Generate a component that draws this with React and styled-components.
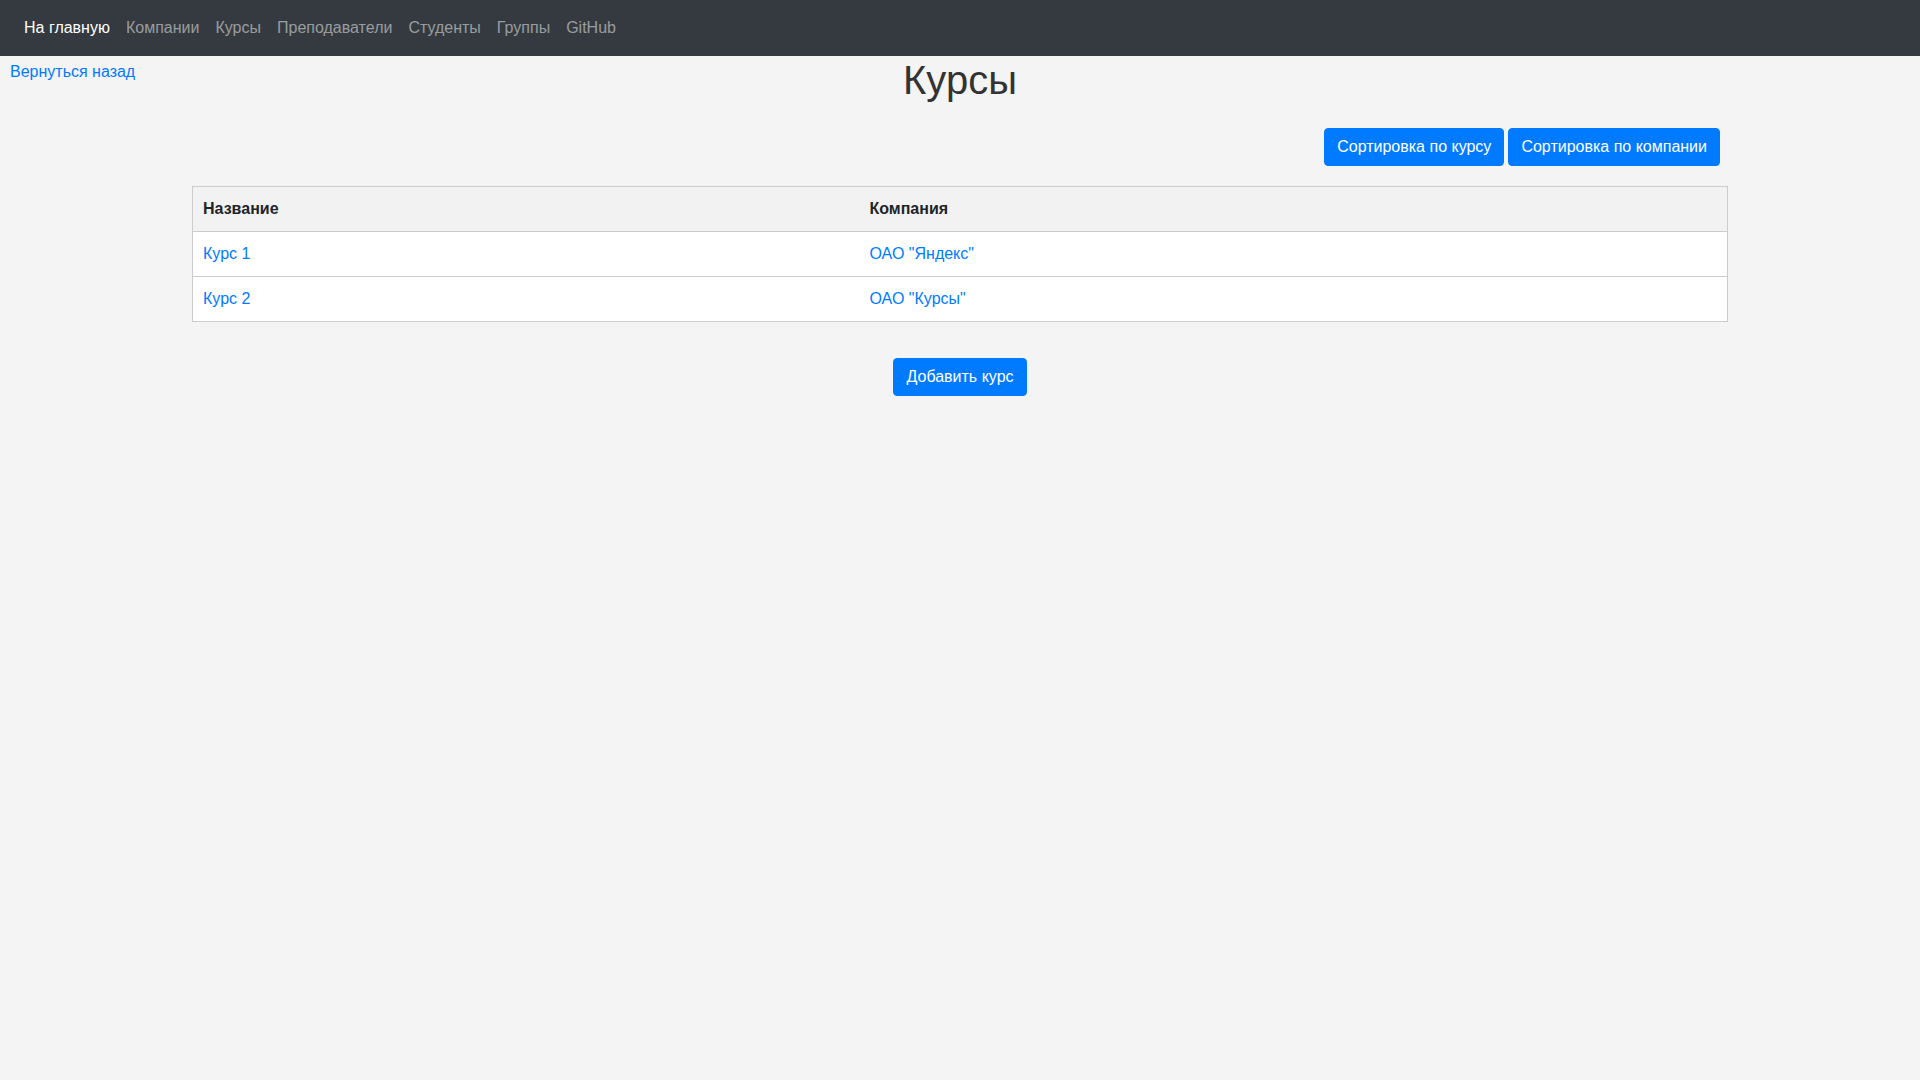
import React from "react";
import styled, { createGlobalStyle } from "styled-components";

const GlobalStyle = createGlobalStyle`
  * { box-sizing: border-box; }
  html, body {
    margin: 0;
    padding: 0;
    background: #f4f4f4;
    font-family: "Liberation Sans", Arial, sans-serif;
    font-size: 16px;
    line-height: 1.5;
    color: #212529;
  }
`;

const NavBar = styled.nav`
  height: 56px;
  background: #343a40;
  display: flex;
  align-items: center;
  padding: 8px 16px;
`;

const NavLink = styled.a`
  padding: 8px;
  color: ${(p) => (p.$active ? "#fff" : "rgba(255,255,255,0.5)")};
  text-decoration: none;
  font-size: 16px;
  line-height: 24px;
  cursor: pointer;
`;

const Header = styled.header`
  display: grid;
  grid-template-columns: 1fr auto 1fr;
  align-items: start;
`;

const BackLink = styled.a`
  justify-self: start;
  margin: 4px 0 0 10px;
  color: #007bff;
  text-decoration: none;
  line-height: 24px;
`;

const Title = styled.h1`
  margin: 0;
  font-size: 40px;
  line-height: 48px;
  font-weight: 500;
  color: #333;
  text-align: center;
`;

const Toolbar = styled.div`
  width: 80%;
  margin: 24px auto 20px;
  padding-right: 8px;
  display: flex;
  justify-content: flex-end;
  gap: 4px;
`;

const Button = styled.button`
  font-family: inherit;
  font-size: 16px;
  line-height: 24px;
  padding: 6px 12px;
  border: 1px solid #007bff;
  border-radius: 4px;
  background: #007bff;
  color: #fff;
  cursor: pointer;
`;

const Table = styled.table`
  width: 80%;
  margin: 0 auto;
  border-collapse: collapse;
  border: 1px solid #cccccc;
  background: #fff;
`;

const Th = styled.th`
  text-align: left;
  padding: 10px;
  line-height: 24px;
  font-weight: 700;
  background: #f2f2f2;
  border-bottom: 1px solid #cccccc;
  width: ${(p) => p.$w || "auto"};
`;

const Td = styled.td`
  padding: 10px;
  line-height: 24px;
  border-bottom: 1px solid #cccccc;
`;

const Link = styled.a`
  color: #007bff;
  text-decoration: none;
`;

const Footer = styled.div`
  display: flex;
  justify-content: center;
  margin-top: 36px;
`;

const navItems = ["На главную", "Компании", "Курсы", "Преподаватели", "Студенты", "Группы", "GitHub"];

const rows = [
  { course: "Курс 1", company: 'ОАО "Яндекс"' },
  { course: "Курс 2", company: 'ОАО "Курсы"' },
];

export default function App() {
  return (
    <>
      <GlobalStyle />
      <NavBar>
        {navItems.map((n, i) => (
          <NavLink key={n} $active={i === 0}>{n}</NavLink>
        ))}
      </NavBar>
      <Header>
        <BackLink>Вернуться назад</BackLink>
        <Title>Курсы</Title>
        <div />
      </Header>
      <Toolbar>
        <Button>Сортировка по курсу</Button>
        <Button>Сортировка по компании</Button>
      </Toolbar>
      <Table>
        <thead>
          <tr>
            <Th $w="667px">Название</Th>
            <Th>Компания</Th>
          </tr>
        </thead>
        <tbody>
          {rows.map((r) => (
            <tr key={r.course}>
              <Td><Link>{r.course}</Link></Td>
              <Td><Link>{r.company}</Link></Td>
            </tr>
          ))}
        </tbody>
      </Table>
      <Footer>
        <Button>Добавить курс</Button>
      </Footer>
    </>
  );
}
